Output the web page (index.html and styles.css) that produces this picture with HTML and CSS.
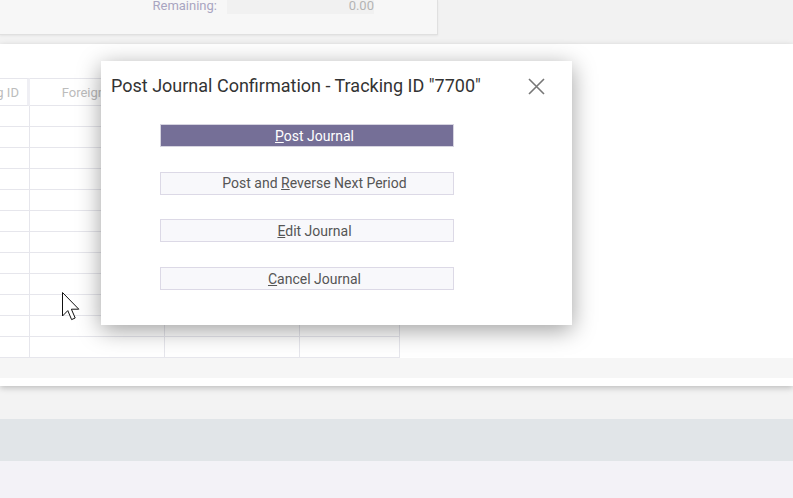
FILE: index.html
```html
<!DOCTYPE html>
<html lang="en">
<head>
    <meta charset="UTF-8">
    <title>Post Journal Confirmation</title>
    <link rel="stylesheet" href="styles.css">
</head>
<body>
    <div class="top">
        <div class="summary">
            <div class="summary-row">
                <span class="summary-label">Remaining:</span>
                <span class="summary-field">0.00</span>
            </div>
        </div>
    </div>

    <div class="main">
        <div class="grid-wrap">
            <table class="grid">
                <colgroup>
                    <col class="w-id">
                    <col class="w-amt">
                    <col class="w-amt">
                    <col class="w-memo">
                </colgroup>
                <thead>
                    <tr>
                        <th>Tracking ID</th>
                        <th>Foreign Debit</th>
                        <th>Foreign Credit</th>
                        <th class="col-last">Memo</th>
                    </tr>
                </thead>
                <tbody>
                    <tr><td></td><td></td><td></td><td></td></tr>
                    <tr><td></td><td></td><td></td><td></td></tr>
                    <tr><td></td><td></td><td></td><td></td></tr>
                    <tr><td></td><td></td><td></td><td></td></tr>
                    <tr><td></td><td></td><td></td><td></td></tr>
                    <tr><td></td><td></td><td></td><td></td></tr>
                    <tr><td></td><td></td><td></td><td></td></tr>
                    <tr><td></td><td></td><td></td><td></td></tr>
                    <tr><td></td><td></td><td></td><td></td></tr>
                    <tr><td></td><td></td><td></td><td></td></tr>
                    <tr><td></td><td></td><td></td><td></td></tr>
                    <tr><td></td><td></td><td></td><td></td></tr>
                </tbody>
            </table>
        </div>
        <div class="grid-foot"></div>
    </div>

    <div class="band-light"></div>
    <div class="band-blue"></div>

    <div class="dialog">
        <div class="dialog-head">
            <h2>Post Journal Confirmation - Tracking ID "7700"</h2>
            <button class="close" type="button" aria-label="Close">
                <svg width="17" height="17" viewBox="0 0 17 17">
                    <path d="M1 1 L16 16 M16 1 L1 16" stroke="#777" stroke-width="1.6" fill="none"/>
                </svg>
            </button>
        </div>
        <div class="actions">
            <button class="btn btn-primary" type="button"><u>P</u>ost Journal</button>
            <button class="btn" type="button">Post and <u>R</u>everse Next Period</button>
            <button class="btn" type="button"><u>E</u>dit Journal</button>
            <button class="btn" type="button"><u>C</u>ancel Journal</button>
        </div>
    </div>

    <svg class="cursor" width="20" height="30" viewBox="0 0 20 30">
        <path d="M0.5 0.5 L0.5 24 L5.8 18.6 L9.6 27.6 L13.2 26 L9.4 17.2 L16.8 17.2 Z" fill="#fff" stroke="#111" stroke-width="1"/>
    </svg>
</body>
</html>
```

FILE: styles.css
```css
body {
    margin: 0;
    font-family: Roboto, "Liberation Sans", sans-serif;
    background-color: #f3f2f7;
    overflow: hidden;
}

/* top summary area */
.top {
    height: 44px;
    background-color: #f2f2f2;
}
.summary {
    width: 438px;
    height: 35px;
    box-sizing: border-box;
    background-color: #f7f7f7;
    border-right: 1px solid #e0e0e0;
    border-bottom: 1px solid #e0e0e0;
    box-shadow: 0 1px 2px rgba(0, 0, 0, 0.06);
    overflow: hidden;
}
.summary-row {
    display: flex;
    margin-top: -3px;
    height: 17px;
    line-height: 17px;
    font-size: 13px;
}
.summary-label {
    width: 217px;
    text-align: right;
    color: #a9a5c1;
}
.summary-field {
    margin-left: 10px;
    width: 147px;
    box-sizing: border-box;
    background-color: #f1f1f1;
    color: #b4b4b4;
    text-align: right;
}

/* grid */
.main {
    background-color: #fff;
    padding-top: 34px;
    padding-bottom: 8px;
    box-shadow: 0 2px 6px rgba(0, 0, 0, 0.22);
    position: relative;
}
.grid-wrap {
    overflow: hidden;
}
.grid {
    margin-left: -62px;
    border-collapse: separate;
    border-spacing: 0;
    table-layout: fixed;
    width: 462px;
}
.w-id {
    width: 92px;
}
.w-amt {
    width: 135px;
}
.w-memo {
    width: 100px;
}
.grid th {
    box-sizing: border-box;
    height: 28px;
    padding: 0 0 0 8px;
    border-top: 1px solid #e6e6ec;
    border-bottom: 1px solid #e6e6ec;
    border-right: 3px solid #efeff4;
    font-size: 13px;
    font-weight: normal;
    color: #bcbcbc;
    text-align: center;
}
.grid th.col-last {
    border-right: 1px solid #e6e6ec;
}
.grid td {
    box-sizing: border-box;
    height: 21px;
    padding: 0;
    border-bottom: 1px solid #e6e6ec;
    border-right: 1px solid #e6e6ec;
}
.grid-foot {
    height: 20px;
    background-color: #f6f6f6;
}

.band-light {
    height: 33px;
    background-color: #f3f3f3;
}
.band-blue {
    height: 42px;
    background-color: #e1e5e8;
}

/* dialog */
.dialog {
    position: absolute;
    left: 101px;
    top: 61px;
    width: 471px;
    height: 264px;
    background-color: #fff;
    box-shadow: 0 5px 22px rgba(0, 0, 0, 0.38);
}
.dialog-head {
    display: flex;
    align-items: center;
    justify-content: space-between;
    padding: 14px 27px 0 10px;
}
.dialog-head h2 {
    margin: 0;
    font-size: 18px;
    font-weight: normal;
    color: #333;
    line-height: 22px;
}
.close {
    border: none;
    background: none;
    padding: 0;
    width: 17px;
    height: 17px;
    cursor: pointer;
}
.actions {
    display: flex;
    flex-direction: column;
    gap: 24.7px;
    padding: 27px 0 0 59px;
}
.btn {
    width: 294px;
    height: 23px;
    padding: 0 0 0 15px;
    border: 1px solid #dcd9e6;
    background-color: #f8f8fb;
    font-family: Roboto, "Liberation Sans", sans-serif;
    font-size: 14px;
    color: #555;
    cursor: pointer;
}
.btn-primary {
    background-color: #756f97;
    border-color: #d6d4e0;
    color: #fff;
}

.cursor {
    position: absolute;
    left: 62px;
    top: 292px;
}
```
